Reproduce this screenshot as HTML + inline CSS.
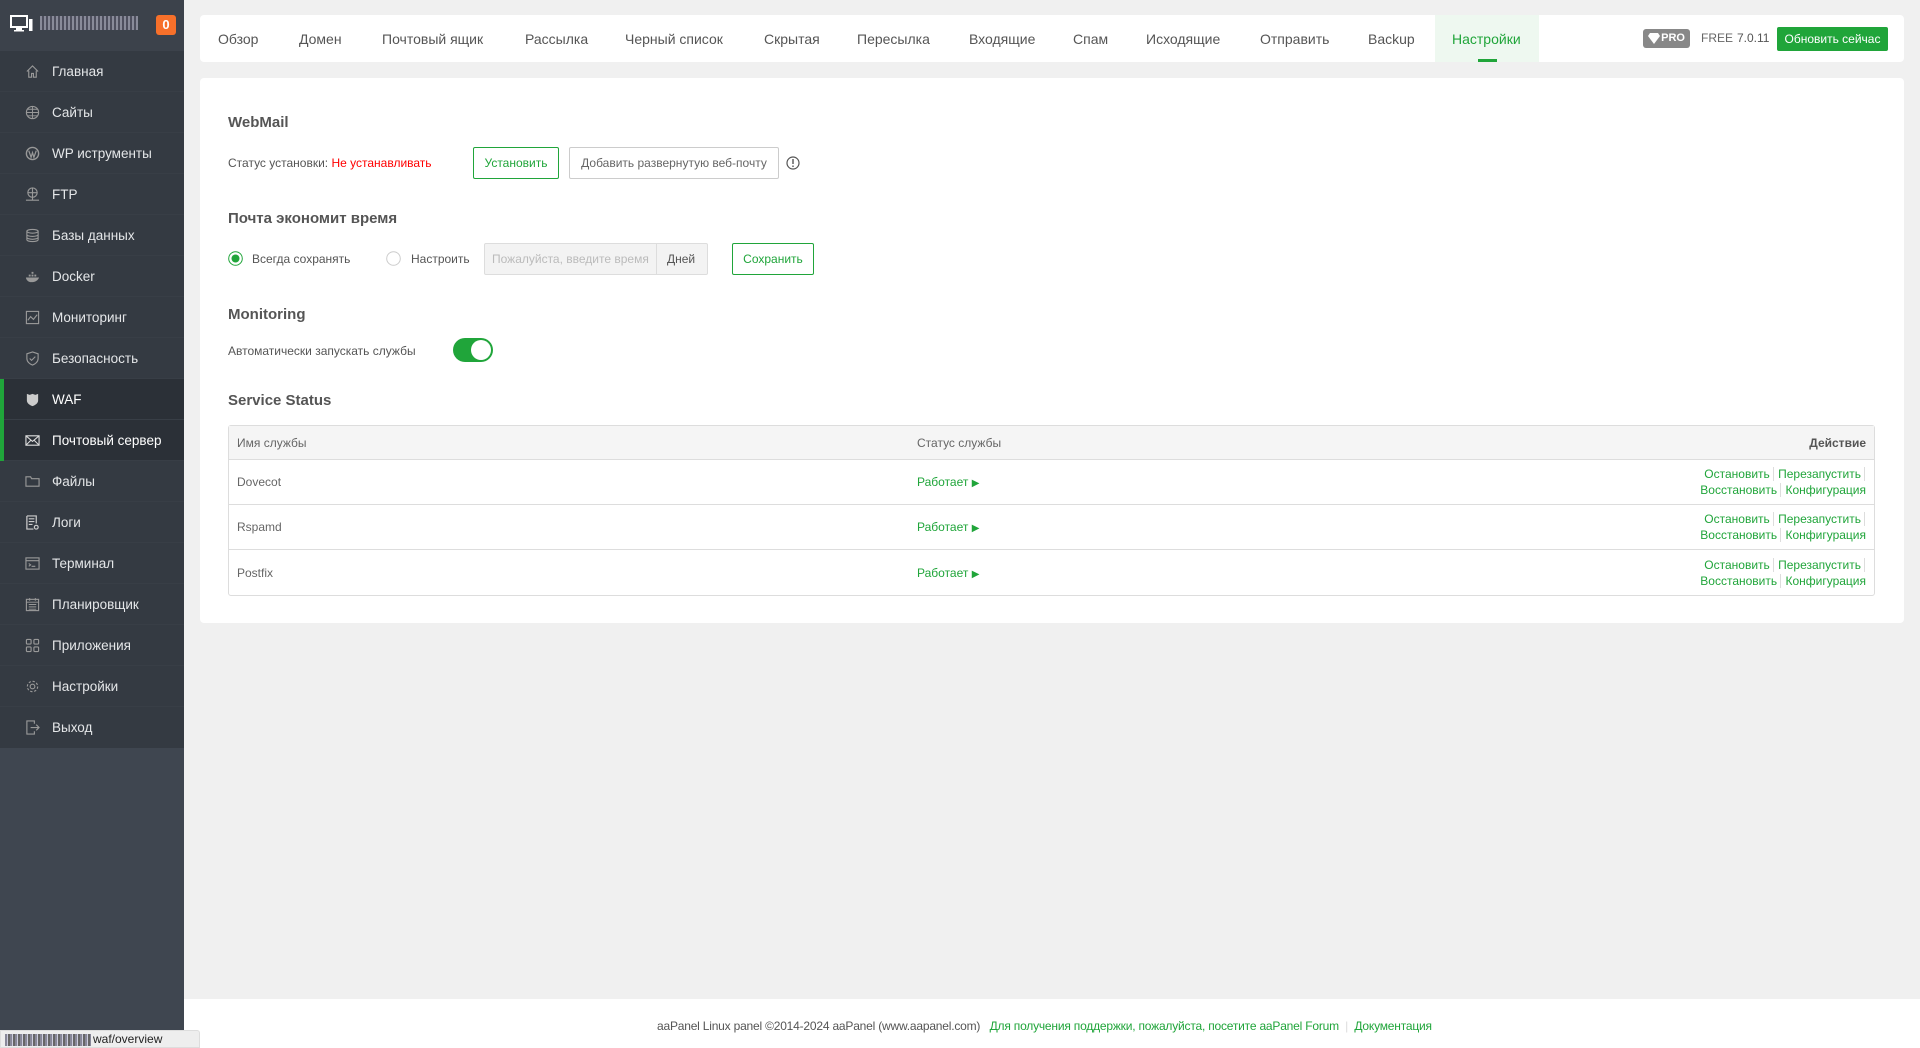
<!DOCTYPE html>
<html><head><meta charset="utf-8">
<style>
*{box-sizing:border-box;margin:0;padding:0}
body{width:1920px;height:1048px;overflow:hidden;background:#f0f0f0;font-family:"Liberation Sans",sans-serif;color:#555;position:relative}
.abs{position:absolute}
#side{left:0;top:0;width:184px;height:1048px;background:#3f4650}
#sh{left:0;top:0;width:184px;height:51px;background:#3c424b}
#items{left:0;top:51px;width:184px;height:697px;background:#343a42}
.it{position:absolute;left:0;width:184px;height:41px;color:#e4e6e8;font-size:13.5px;line-height:41px;padding-left:52px;border-bottom:1px solid #383e46}
.it.act{background:#2b3037;color:#fff}
.it.act:before{content:"";position:absolute;left:0;top:0;width:4px;height:41px;background:#20a53a}
.ic{position:absolute;left:25px;top:13px;width:15px;height:15px}
.ic svg{width:15px;height:15px;display:block}
#tabs{left:200px;top:15px;width:1704px;height:47px;background:#fff;border-radius:4px}
.tab{position:absolute;top:1px;line-height:47px;font-size:14px;color:#555}
#card{left:200px;top:78px;width:1704px;height:545px;background:#fff;border-radius:4px}
h3{position:absolute;font-size:15px;font-weight:bold;color:#555}
.t{position:absolute;font-size:12px;color:#555}
.btn{position:absolute;height:32px;line-height:30px;font-size:12px;text-align:center;border:1px solid #20a53a;color:#20a53a;border-radius:2px;background:#fff}
.g{color:#20a53a}
table{position:absolute;left:228px;top:425px;width:1647px;border-collapse:separate;border-spacing:0;border:1px solid #ddd;border-radius:3px;font-size:12px}
th{background:#f5f5f5;height:34px;text-align:left;font-weight:normal;color:#666;padding:0 8px;border-bottom:1px solid #ddd}
td{height:45px;padding:0 8px;border-bottom:1px solid #ddd;color:#666}
tr:last-child td{border-bottom:none}
.act2{text-align:right;line-height:16px;font-size:12px;color:#20a53a}
.act2 span{border-right:1px solid #ddd;padding-right:3px;margin-right:1px}
</style></head><body>
<div id="side" class="abs"></div>
<div id="sh" class="abs">
 <svg class="abs" style="left:10px;top:14px" width="24" height="20" viewBox="0 0 24 20"><rect x="1" y="2" width="16" height="11" fill="none" stroke="#fff" stroke-width="2"/><rect x="6" y="14" width="6" height="2" fill="#fff"/><rect x="4" y="16" width="10" height="1.5" fill="#fff"/><rect x="19" y="5" width="3.5" height="12" fill="#fff"/></svg>
 <div class="abs" style="left:40px;top:16px;width:98px;height:14px;background:repeating-linear-gradient(90deg,#aab 0 2px,#556 2px 4px);opacity:.7"></div>
 <div class="abs" style="left:156px;top:15px;width:20px;height:20px;background:#f7702a;border-radius:3px;color:#fff;font-weight:bold;font-size:13px;text-align:center;line-height:20px">0</div>
</div>
<div id="items" class="abs">
<div class="it" style="top:0"><span class="ic"><svg viewBox="0 0 16 16"><path d="M2 8L8 2l6 6M4 7v7h3v-4h2v4h3V7" fill="none" stroke="#999" stroke-width="1.2"/></svg></span>Главная</div>
<div class="it" style="top:41px"><span class="ic"><svg viewBox="0 0 16 16"><circle cx="8" cy="8" r="6.5" fill="none" stroke="#999" stroke-width="1.2"/><path d="M1.5 8h13M8 1.5v13M3 4.5h10M3 11.5h10" stroke="#999" stroke-width="1"/></svg></span>Сайты</div>
<div class="it" style="top:82px"><span class="ic"><svg viewBox="0 0 16 16"><circle cx="8" cy="8" r="6.5" fill="none" stroke="#999" stroke-width="1.5"/><path d="M4 5l2.5 7L8 7l1.5 5L12 5" fill="none" stroke="#999" stroke-width="1.3"/></svg></span>WP иструменты</div>
<div class="it" style="top:123px"><span class="ic"><svg viewBox="0 0 16 16"><circle cx="8" cy="6" r="5" fill="none" stroke="#999" stroke-width="1.2"/><path d="M3 6h10M8 1v10M1 14h14M8 11v3" stroke="#999" stroke-width="1.2"/></svg></span>FTP</div>
<div class="it" style="top:164px"><span class="ic"><svg viewBox="0 0 16 16"><ellipse cx="8" cy="3.5" rx="6" ry="2" fill="none" stroke="#999" stroke-width="1.2"/><path d="M2 3.5v9c0 1.1 2.7 2 6 2s6-.9 6-2v-9M2 7c0 1.1 2.7 2 6 2s6-.9 6-2M2 10c0 1.1 2.7 2 6 2s6-.9 6-2" fill="none" stroke="#999" stroke-width="1.2"/></svg></span>Базы данных</div>
<div class="it" style="top:205px"><span class="ic"><svg viewBox="0 0 16 16"><path d="M1 9h14c-1 3-4 5-8 5S1 11 1 9zM4 6h2v2H4zM7 6h2v2H7zM7 3h2v2H7zM10 6h2v2h-2z" fill="#999"/></svg></span>Docker</div>
<div class="it" style="top:246px"><span class="ic"><svg viewBox="0 0 16 16"><rect x="1.5" y="1.5" width="13" height="13" fill="none" stroke="#999" stroke-width="1.2"/><path d="M3 11l3-4 3 3 4-5" fill="none" stroke="#999" stroke-width="1.2"/></svg></span>Мониторинг</div>
<div class="it" style="top:287px"><span class="ic"><svg viewBox="0 0 16 16"><path d="M8 1l6 2v5c0 3.5-3 6-6 7-3-1-6-3.5-6-7V3z" fill="none" stroke="#999" stroke-width="1.2"/><path d="M5 8l2 2 4-4" fill="none" stroke="#999" stroke-width="1.2"/></svg></span>Безопасность</div>
<div class="it act" style="top:328px"><span class="ic"><svg viewBox="0 0 16 16"><path d="M2 2l3 1 3-1 3 1 3-1v7c0 3-3 5-6 6-3-1-6-3-6-6z" fill="#ccc"/></svg></span>WAF</div>
<div class="it act" style="top:369px"><span class="ic"><svg viewBox="0 0 16 16"><rect x="1" y="3" width="14" height="10" fill="none" stroke="#ddd" stroke-width="1.2"/><path d="M1 3l7 6 7-6M1 13l5-5M15 13l-5-5" fill="none" stroke="#ddd" stroke-width="1.1"/></svg></span>Почтовый сервер</div>
<div class="it" style="top:410px"><span class="ic"><svg viewBox="0 0 16 16"><path d="M1 3h5l1 2h8v8H1z" fill="none" stroke="#999" stroke-width="1.2"/></svg></span>Файлы</div>
<div class="it" style="top:451px"><span class="ic"><svg viewBox="0 0 16 16"><path d="M2 1h10v8M2 1v14h7" fill="none" stroke="#ccc" stroke-width="1.3"/><path d="M4 4h6M4 7h6M4 10h4" stroke="#ccc" stroke-width="1.2"/><circle cx="12" cy="13" r="2" fill="none" stroke="#ccc" stroke-width="1.3"/></svg></span>Логи</div>
<div class="it" style="top:492px"><span class="ic"><svg viewBox="0 0 16 16"><rect x="1" y="2" width="14" height="12" fill="none" stroke="#999" stroke-width="1.2"/><path d="M1 5h14M4 8l2 1.5L4 11M7 11h4" fill="none" stroke="#999" stroke-width="1.1"/></svg></span>Терминал</div>
<div class="it" style="top:533px"><span class="ic"><svg viewBox="0 0 16 16"><rect x="1.5" y="2.5" width="13" height="12" fill="none" stroke="#999" stroke-width="1.2"/><path d="M1.5 5.5h13M5 1v3M11 1v3M4 8h8M4 10.5h8M4 13h8" stroke="#999" stroke-width="1"/></svg></span>Планировщик</div>
<div class="it" style="top:574px"><span class="ic"><svg viewBox="0 0 16 16"><rect x="1.5" y="1.5" width="5" height="5" rx="1" fill="none" stroke="#999" stroke-width="1.2"/><rect x="9.5" y="1.5" width="5" height="5" rx="1" fill="none" stroke="#999" stroke-width="1.2"/><rect x="1.5" y="9.5" width="5" height="5" rx="1" fill="none" stroke="#999" stroke-width="1.2"/><rect x="9.5" y="9.5" width="5" height="5" rx="1" fill="none" stroke="#999" stroke-width="1.2"/></svg></span>Приложения</div>
<div class="it" style="top:615px"><span class="ic"><svg viewBox="0 0 16 16"><circle cx="8" cy="8" r="2.5" fill="none" stroke="#999" stroke-width="1.2"/><circle cx="8" cy="8" r="5.5" fill="none" stroke="#999" stroke-width="1.2" stroke-dasharray="2.5 1.8"/></svg></span>Настройки</div>
<div class="it" style="top:656px;border-bottom:none"><span class="ic"><svg viewBox="0 0 16 16"><path d="M10 4V1H2v14h8v-3M6 8h9M12 5l3 3-3 3" fill="none" stroke="#999" stroke-width="1.2"/></svg></span>Выход</div>
</div>

<div id="tabs" class="abs">
<div class="abs" style="left:1235px;top:0;width:104px;height:47px;background:#eef8f0"></div>
<div class="abs" style="left:1278px;top:44px;width:19px;height:3px;background:#20a53a"></div>
<span class="tab" style="left:18px">Обзор</span>
<span class="tab" style="left:99px">Домен</span>
<span class="tab" style="left:182px">Почтовый ящик</span>
<span class="tab" style="left:325px">Рассылка</span>
<span class="tab" style="left:425px">Черный список</span>
<span class="tab" style="left:564px">Скрытая</span>
<span class="tab" style="left:657px">Пересылка</span>
<span class="tab" style="left:769px">Входящие</span>
<span class="tab" style="left:873px">Спам</span>
<span class="tab" style="left:946px">Исходящие</span>
<span class="tab" style="left:1060px">Отправить</span>
<span class="tab" style="left:1168px">Backup</span>
<span class="tab g" style="left:1252px">Настройки</span>
<div class="abs" style="left:1443px;top:14px;width:47px;height:19px;background:#888;border-radius:3px;color:#fff;font-size:11px;font-weight:bold;line-height:19px;text-align:right;padding-right:5px">PRO<svg class="abs" style="left:5px;top:4px" width="12" height="11" viewBox="0 0 12 11"><path d="M2 0h8l2 3-6 8-6-8z" fill="#fff"/></svg></div>
<span class="abs" style="left:1501px;top:0;line-height:47px;font-size:12px;color:#666">FREE</span>
<span class="abs" style="left:1537px;top:0;line-height:47px;font-size:12px;color:#555">7.0.11</span>
<div class="abs" style="left:1577px;top:12px;width:111px;height:24px;background:#20a53a;border-radius:2px;color:#fff;font-size:12px;text-align:center;line-height:24px">Обновить сейчас</div>
</div>

<div id="card" class="abs"></div>
<h3 style="left:228px;top:114px">WebMail</h3>
<div class="t" style="left:228px;top:156px">Статус установки: <span style="color:#f00">Не устанавливать</span></div>
<div class="btn" style="left:473px;top:147px;width:86px">Установить</div>
<div class="btn" style="left:569px;top:147px;width:210px;border-color:#ccc;color:#666">Добавить развернутую веб-почту</div>
<svg class="abs" style="left:786px;top:156px" width="14" height="14" viewBox="0 0 14 14"><circle cx="7" cy="7" r="6" fill="none" stroke="#555" stroke-width="1.2"/><path d="M7 3v5M7 9.5v1.5" stroke="#555" stroke-width="1.4"/></svg>

<h3 style="left:228px;top:210px">Почта экономит время</h3>
<svg class="abs" style="left:228px;top:251px" width="15" height="15"><circle cx="7.5" cy="7.5" r="6.8" fill="#fff" stroke="#20a53a"/><circle cx="7.5" cy="7.5" r="4" fill="#20a53a"/></svg>
<div class="t" style="left:252px;top:252px">Всегда сохранять</div>
<svg class="abs" style="left:386px;top:251px" width="15" height="15"><circle cx="7.5" cy="7.5" r="6.8" fill="#fff" stroke="#ccc"/></svg>
<div class="t" style="left:411px;top:252px">Настроить</div>
<div class="abs" style="left:484px;top:243px;width:224px;height:32px;background:#f3f3f3;border:1px solid #ddd;border-radius:2px"></div>
<div class="abs" style="left:656px;top:243px;width:1px;height:32px;background:#ddd"></div>
<div class="t" style="left:492px;top:252px;color:#bbb">Пожалуйста, введите время</div>
<div class="t" style="left:667px;top:252px">Дней</div>
<div class="btn" style="left:732px;top:243px;width:82px">Сохранить</div>

<h3 style="left:228px;top:306px">Monitoring</h3>
<div class="t" style="left:228px;top:344px">Автоматически запускать службы</div>
<div class="abs" style="left:453px;top:338px;width:40px;height:24px;background:#20a53a;border-radius:12px"><div class="abs" style="left:18px;top:2px;width:20px;height:20px;border-radius:50%;background:#fff"></div></div>

<h3 style="left:228px;top:392px">Service Status</h3>
<table>
<tr><th style="width:680px">Имя службы</th><th>Статус службы</th><th style="text-align:right;font-weight:bold;color:#555">Действие</th></tr>
<tr><td>Dovecot</td><td class="g">Работает <span style="font-size:10px">▶</span></td><td class="act2"><span>Остановить</span> <span>Перезапустить</span><br><span>Восстановить</span> Конфигурация</td></tr>
<tr><td>Rspamd</td><td class="g">Работает <span style="font-size:10px">▶</span></td><td class="act2"><span>Остановить</span> <span>Перезапустить</span><br><span>Восстановить</span> Конфигурация</td></tr>
<tr><td>Postfix</td><td class="g">Работает <span style="font-size:10px">▶</span></td><td class="act2"><span>Остановить</span> <span>Перезапустить</span><br><span>Восстановить</span> Конфигурация</td></tr>
</table>

<div class="abs" style="left:184px;top:999px;width:1736px;height:49px;background:#fff"></div>
<div class="abs" style="left:657px;top:1019px;font-size:12px;color:#555;white-space:nowrap;letter-spacing:-0.2px">aaPanel Linux panel ©2014-2024 aaPanel (www.aapanel.com) &nbsp; <span class="g">Для получения поддержки, пожалуйста, посетите aaPanel Forum</span> <span style="color:#ddd">&nbsp;|&nbsp;</span> <span class="g">Документация</span></div>

<div class="abs" style="left:0;top:1030px;width:200px;height:18px;background:#eee;border:1px solid #ddd;border-radius:0 3px 0 0"></div>
<div class="abs" style="left:5px;top:1034px;width:86px;height:12px;background:repeating-linear-gradient(90deg,#889 0 2px,#ccd 2px 3px,#666 3px 5px)"></div>
<div class="abs" style="left:93px;top:1032px;font-size:12px;color:#222">waf/overview</div>
</body></html>
